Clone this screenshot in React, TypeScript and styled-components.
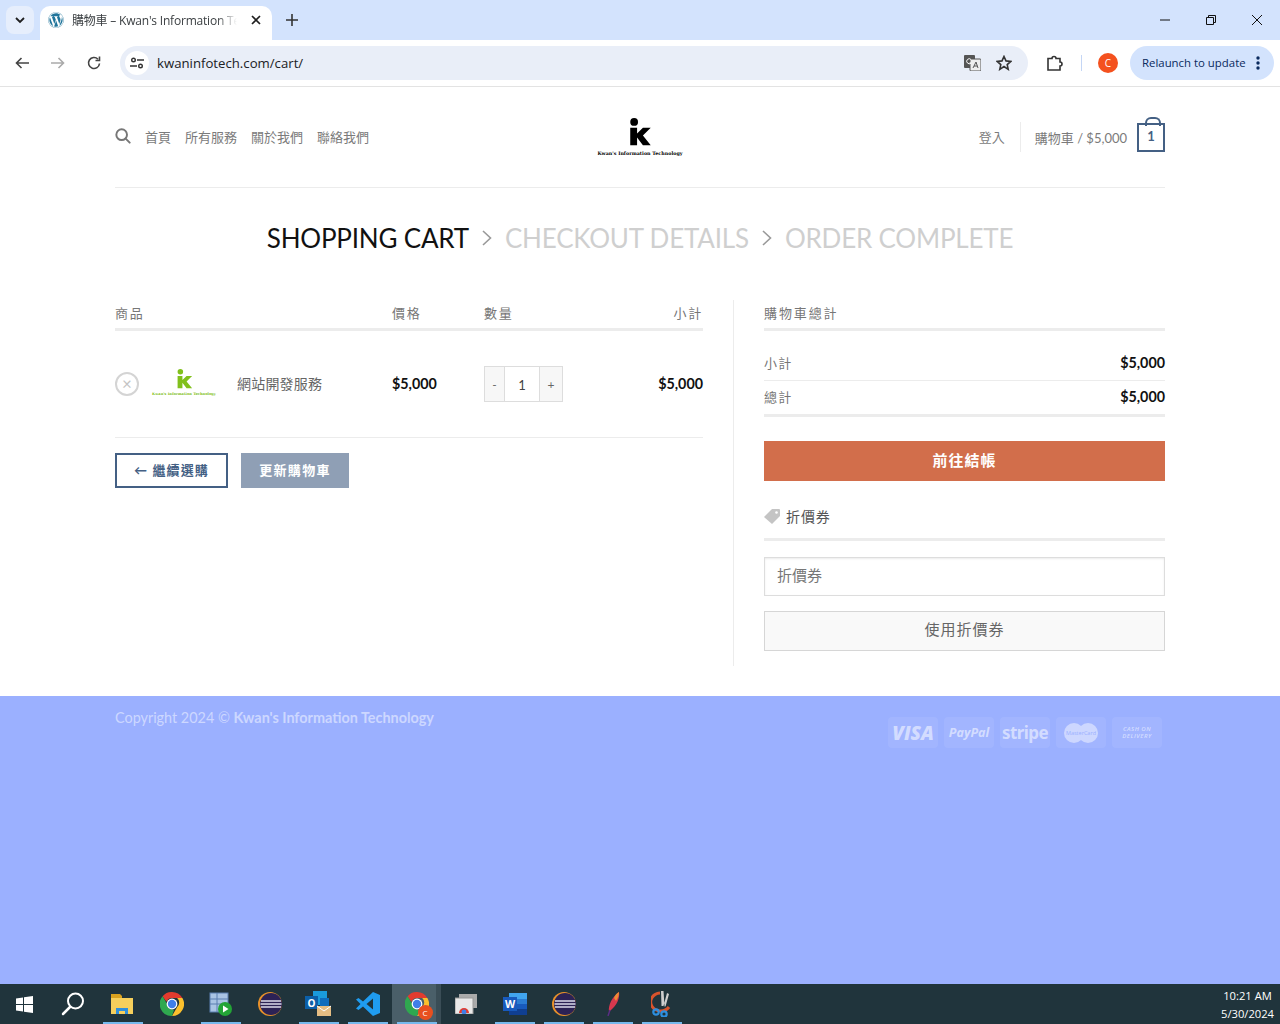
import React from "react";
import styled, { createGlobalStyle } from "styled-components";
import { FaWordpress } from "react-icons/fa";

const GlobalStyle = createGlobalStyle`
    html, body {
        margin: 0;
        padding: 0;
        background: #fff;
    }
    * {
        box-sizing: border-box;
    }
`;

const pageFont = `Lato, "Noto Sans CJK TC", sans-serif`;
const uiFont = `"Open Sans", "Noto Sans CJK TC", sans-serif`;

const Screen = styled.div`
    width: 1280px;
    height: 1024px;
    display: flex;
    flex-direction: column;
    overflow: hidden;
    font-family: ${pageFont};
`;

/* browser chrome */
const TabStrip = styled.div`
    height: 40px;
    background: #d3e3fd;
    display: flex;
    align-items: flex-end;
    padding-left: 6px;
    flex: none;
`;

const TabSearch = styled.div`
    width: 28px;
    height: 28px;
    margin-bottom: 6px;
    border-radius: 8px;
    background: #e6eefc;
    display: flex;
    align-items: center;
    justify-content: center;
`;

const Tab = styled.div`
    width: 232px;
    height: 34px;
    margin-left: 6px;
    border-radius: 10px 10px 0 0;
    background: #fff;
    display: flex;
    align-items: center;
    padding: 0 8px 6px;
    position: relative;
`;

const TabTitle = styled.div`
    width: 165px;
    margin-left: 8px;
    font: 12px ${uiFont};
    letter-spacing: -0.2px;
    color: #3c4043;
    white-space: nowrap;
    -webkit-mask-image: linear-gradient(90deg, #000 88%, transparent);
    mask-image: linear-gradient(90deg, #000 88%, transparent);
`;

const IconSlot = styled.div<{ $w?: number; $ml?: number }>`
    width: ${(p) => p.$w ?? 16}px;
    margin-left: ${(p) => p.$ml ?? 0}px;
    display: flex;
    align-items: center;
    justify-content: center;
    flex: none;
`;

const NewTab = styled(IconSlot)`
    height: 28px;
    margin-bottom: 6px;
`;

const WindowControls = styled.div`
    margin-left: auto;
    height: 40px;
    display: flex;
    align-items: center;
`;

const WindowButton = styled.div`
    width: 46px;
    height: 40px;
    display: flex;
    align-items: center;
    justify-content: center;
`;

const Toolbar = styled.div`
    height: 47px;
    background: #fff;
    border-bottom: 1px solid #e3e3e3;
    display: flex;
    align-items: center;
    padding: 0 6px 1px 4px;
    flex: none;
`;

const NavButton = styled.div`
    width: 36px;
    height: 34px;
    display: flex;
    align-items: center;
    justify-content: center;
`;

const Omnibox = styled.div`
    width: 908px;
    height: 34px;
    margin-left: 8px;
    border-radius: 17px;
    background: #e9eef8;
    display: flex;
    align-items: center;
    padding: 0 15px 0 5px;
`;

const SiteInfo = styled.div`
    width: 24px;
    height: 24px;
    border-radius: 50%;
    background: #fff;
    display: flex;
    align-items: center;
    justify-content: center;
`;

const Url = styled.div`
    flex: 1;
    margin-left: 8px;
    font: 13.2px ${uiFont};
    color: #202124;
`;

const Avatar = styled.div`
    width: 20px;
    height: 20px;
    border-radius: 50%;
    background: #f4511e;
    color: #fff;
    font: 10px ${uiFont};
    display: flex;
    align-items: center;
    justify-content: center;
    margin-left: 16px;
`;

const ToolbarRule = styled.div`
    width: 1px;
    height: 16px;
    background: #c4d6f5;
    margin-left: 17px;
`;

const Relaunch = styled.div`
    width: 144px;
    height: 34px;
    margin-left: 12px;
    border-radius: 17px;
    background: #d3e3fd;
    color: #0a2a5e;
    font: 11.4px ${uiFont};
    display: flex;
    align-items: center;
    justify-content: space-between;
    padding: 0 14px 0 12px;
`;

/* page */
const Page = styled.div`
    flex: 1;
    background: #fff;
    display: flex;
    flex-direction: column;
`;

const Container = styled.div`
    width: 1050px;
    margin-left: 115px;
`;

const Header = styled(Container)`
    height: 101px;
    border-bottom: 1px solid #ececec;
    display: grid;
    grid-template-columns: 1fr 100px 1fr;
    align-items: center;
`;

const NavLeft = styled.div`
    display: flex;
    align-items: center;
    padding-bottom: 2px;
`;

const NavLink = styled.span`
    font-size: 13px;
    color: #7b7b7b;
    margin-left: 14px;
    letter-spacing: 0;
`;

const Logo = styled.div<{ $color: string; $size: number; $mark: number; $gap: number }>`
    display: flex;
    flex-direction: column;
    align-items: center;
    color: ${(p) => p.$color};
    font-family: "DejaVu Serif", serif;
    font-weight: 700;
    font-size: ${(p) => p.$size}px;
    line-height: 1;
    white-space: nowrap;

    svg {
        width: ${(p) => p.$mark}px;
        height: ${(p) => p.$mark * 1.22}px;
        margin-bottom: ${(p) => p.$gap}px;
        fill: ${(p) => p.$color};
    }
`;

const NavRight = styled.div`
    display: flex;
    align-items: center;
    justify-content: flex-end;
    font-size: 13px;
    color: #7b7b7b;
`;

const Login = styled.span`
    padding-right: 15px;
    height: 30px;
    line-height: 30px;
    border-right: 1px solid #ececec;
    margin-right: 14px;
`;

const CartBox = styled.div`
    width: 28px;
    height: 29px;
    margin-left: 10px;
    border: 2px solid #446084;
    color: #446084;
    font-size: 13px;
    font-weight: 700;
    display: flex;
    align-items: center;
    justify-content: center;
    padding-bottom: 2px;
    position: relative;

    &::before {
        content: "";
        position: absolute;
        left: 6px;
        top: -8px;
        width: 12px;
        height: 7px;
        border: 2px solid #446084;
        border-bottom: 0;
        border-radius: 6px 6px 0 0;
    }
`;

const Steps = styled.div`
    height: 101px;
    padding-bottom: 2px;
    display: flex;
    align-items: center;
    justify-content: center;
    font-size: 26px;
    letter-spacing: -0.2px;
    color: #cfcfcf;
`;

const Step = styled.span<{ $active?: boolean }>`
    color: ${(p) => (p.$active ? "#111" : "#cfcfcf")};
`;

const StepArrow = styled.span`
    display: flex;
    margin: 0 13px;
`;

const CartLayout = styled(Container)`
    display: grid;
    grid-template-columns: 619px 431px;
    height: 366px;
    margin-top: 11px;
    margin-bottom: 30px;
`;

const CartColumn = styled.div`
    padding-right: 30px;
    border-right: 1px solid #ececec;
`;

const HeadRow = styled.div`
    height: 31px;
    padding-top: 4px;
    border-bottom: 3px solid #ececec;
    display: grid;
    grid-template-columns: 277px 92px 1fr auto;
    font-size: 13px;
    color: #777;
    letter-spacing: 1.7px;
    line-height: 18px;
`;

const Price = styled.span`
    font-size: 14.3px;
    font-weight: 700;
    color: #111;
`;

const ItemRow = styled.div`
    height: 107px;
    border-bottom: 1px solid #ececec;
    display: grid;
    grid-template-columns: 277px 92px 1fr auto;
    align-items: center;

    ${Price} {
        margin-bottom: 2px;
    }
`;

const ItemCell = styled.div`
    display: flex;
    align-items: center;
`;

const RemoveButton = styled.div`
    width: 24px;
    height: 24px;
    border-radius: 50%;
    border: 2px solid #d4d4d4;
    color: #c4c4c4;
    display: flex;
    align-items: center;
    justify-content: center;
    font-size: 17px;
    line-height: 1;
    padding-bottom: 1px;
`;

const ItemLogo = styled.div`
    width: 66px;
    margin-left: 12px;
    padding-bottom: 2px;
`;

const ItemName = styled.span`
    margin-left: 20px;
    margin-bottom: 2px;
    font-size: 14px;
    color: #666;
    letter-spacing: 0.2px;
`;

const Quantity = styled.div`
    display: flex;
    height: 36px;
    width: 79px;
    border: 1px solid #ddd;
`;

const QtyStep = styled.div<{ $w: number }>`
    width: ${(p) => p.$w}px;
    background: #f7f7f7;
    color: #666;
    font-size: 12px;
    display: flex;
    align-items: center;
    justify-content: center;
`;

const QtyValue = styled.div`
    flex: 1;
    padding-top: 1px;
    border-left: 1px solid #ddd;
    border-right: 1px solid #ddd;
    color: #444;
    font-size: 13px;
    display: flex;
    align-items: center;
    justify-content: center;
`;

const CartActions = styled.div`
    display: flex;
    gap: 13px;
    margin-top: 15px;
`;

const ContinueButton = styled.div`
    width: 113px;
    height: 35px;
    padding-bottom: 2px;
    border: 2px solid #446084;
    color: #446084;
    font-size: 13px;
    font-weight: 700;
    letter-spacing: 1.1px;
    display: flex;
    align-items: center;
    justify-content: center;
`;

const UpdateButton = styled.div`
    width: 108px;
    height: 35px;
    padding-bottom: 2px;
    background: #8f9fb5;
    color: #fff;
    font-size: 13px;
    font-weight: 700;
    letter-spacing: 1.3px;
    display: flex;
    align-items: center;
    justify-content: center;
`;

const TotalsColumn = styled.div`
    padding-left: 30px;
`;

const TotalsHead = styled.div`
    height: 31px;
    padding-top: 4px;
    border-bottom: 3px solid #ececec;
    font-size: 13px;
    color: #777;
    letter-spacing: 1.9px;
    line-height: 18px;
`;

const TotalRow = styled.div<{ $thick?: boolean }>`
    height: ${(p) => (p.$thick ? 36 : 34)}px;
    border-bottom: ${(p) => (p.$thick ? "3px" : "1px")} solid #ececec;
    padding-bottom: ${(p) => (p.$thick ? 3 : 0)}px;
    display: flex;
    align-items: center;
    justify-content: space-between;
    font-size: 13px;
    color: #777;
    letter-spacing: 1.2px;

    ${Price} {
        letter-spacing: 0;
    }
`;

const FirstTotal = styled(TotalRow)`
    height: 50px;
    padding-top: 14px;
`;

const CheckoutButton = styled.div`
    height: 40px;
    margin-top: 24px;
    padding-bottom: 4px;
    background: #d26e4b;
    color: #fff;
    font-size: 15px;
    font-weight: 700;
    letter-spacing: 1px;
    display: flex;
    align-items: center;
    justify-content: center;
`;

const CouponHead = styled.div`
    height: 42px;
    margin-top: 18px;
    padding-bottom: 5px;
    border-bottom: 3px solid #ececec;
    display: flex;
    align-items: center;
    gap: 6px;
    font-size: 14px;
    color: #555;
    letter-spacing: 0.9px;
`;

const CouponField = styled.div`
    height: 39px;
    margin-top: 16px;
    padding: 0 0 4px 12px;
    border: 1px solid #ddd;
    box-shadow: inset 0 1px 2px rgba(0, 0, 0, 0.08);
    display: flex;
    align-items: center;
    font-size: 15px;
    color: #777;
`;

const CouponButton = styled.div`
    height: 40px;
    margin-top: 15px;
    padding-bottom: 5px;
    border: 1px solid #d6d6d6;
    background: #f9f9f9;
    color: #666;
    font-size: 15px;
    letter-spacing: 1px;
    display: flex;
    align-items: center;
    justify-content: center;
`;

/* footer */
const Footer = styled.div`
    height: 288px;
    background: #9bb0ff;
    flex: none;
`;

const FooterInner = styled(Container)`
    display: flex;
    justify-content: space-between;
    padding-top: 13px;
`;

const Copyright = styled.div`
    font-size: 14.4px;
    line-height: 18px;
    color: rgba(255, 255, 255, 0.5);

    strong {
        font-weight: 700;
    }
`;

const Payments = styled.div`
    display: flex;
    gap: 6px;
    margin-top: 8px;
    margin-right: 3px;
`;

const PayTile = styled.div`
    width: 50px;
    height: 31px;
    border-radius: 4px;
    background: rgba(255, 255, 255, 0.07);
    color: rgba(255, 255, 255, 0.55);
    display: flex;
    align-items: center;
    justify-content: center;
    font-family: "Open Sans", sans-serif;
    font-weight: 700;
    white-space: nowrap;
    position: relative;
`;

const Visa = styled.span`
    font-size: 19px;
    font-style: italic;
    font-weight: 800;
`;

const PayPal = styled.span`
    font-size: 12.5px;
    font-style: italic;
`;

const Stripe = styled.span`
    font-size: 17px;
    letter-spacing: -0.6px;
    font-family: "Noto Sans", sans-serif;
`;

const MasterCircles = styled.div`
    width: 34px;
    height: 20px;
    display: flex;
    align-items: center;
    justify-content: center;
    color: #9bb0ff;
    font-size: 5.5px;
    font-weight: 400;
    position: relative;

    &::before,
    &::after {
        content: "";
        position: absolute;
        top: 0;
        width: 20px;
        height: 20px;
        border-radius: 50%;
        background: #cdd7ff;
    }

    &::before {
        left: 0;
    }

    &::after {
        right: 0;
    }

    span {
        position: relative;
        z-index: 1;
    }
`;

const Cash = styled.span`
    font-size: 6px;
    font-style: italic;
    font-weight: 600;
    line-height: 7px;
    text-align: center;
    letter-spacing: 0.5px;
`;

/* taskbar */
const Taskbar = styled.div`
    height: 40px;
    background: #20343c;
    display: flex;
    flex: none;
`;

const TaskStart = styled.div<{ $w: number; $pr?: number }>`
    width: ${(p) => p.$w}px;
    padding-right: ${(p) => p.$pr ?? 0}px;
    display: flex;
    align-items: center;
    justify-content: center;
    flex: none;
`;

const TaskItem = styled.div<{ $open?: boolean; $active?: boolean }>`
    width: 49px;
    height: 40px;
    flex: none;
    display: flex;
    align-items: center;
    justify-content: center;
    position: relative;
    background: ${(p) => (p.$active ? "linear-gradient(90deg, #4a5f69 44px, #3a4d56 44px)" : "transparent")};

    &::after {
        content: "";
        display: ${(p) => (p.$open ? "block" : "none")};
        position: absolute;
        left: 5px;
        right: 4px;
        bottom: 0;
        height: 2px;
        background: #76b9ed;
    }
`;

const BadgedIcon = styled.div`
    display: flex;
    position: relative;
`;

const TaskBadge = styled.span`
    position: absolute;
    right: -4px;
    bottom: -4px;
    width: 15px;
    height: 15px;
    border-radius: 50%;
    background: #e8501f;
    color: #fff;
    font: 8px/15px ${uiFont};
    text-align: center;
`;

const Clock = styled.div`
    margin-left: auto;
    padding: 3px 6px 0 0;
    color: #fff;
    font: 11.2px/18px ${uiFont};
    text-align: center;
`;

const KMark = () => (
    <svg viewBox="0 0 24 30">
        <circle cx="6" cy="4" r="4" />
        <path d="M2 10h7v6l6-6h8l-8 8 8 10h-8l-6-8v8H2z" />
    </svg>
);

const Search = () => (
    <svg width="16" height="16" viewBox="0 0 18 18" fill="none" stroke="#777" strokeWidth="2.2">
        <circle cx="7.5" cy="7.5" r="6" />
        <path d="M12 12l4.5 4.5" strokeLinecap="round" />
    </svg>
);

const Chevron = () => (
    <svg width="10" height="18" viewBox="0 0 10 18" fill="none" stroke="#999" strokeWidth="1.6">
        <path d="M1 2l7.5 7L1 16" />
    </svg>
);

const ChromeLogo = () => (
    <svg width="24" height="24" viewBox="0 0 24 24">
        <path d="M12 0a12 12 0 0 1 10.4 6H12a6 6 0 0 0-5.6 3.8L2.6 4.2A12 12 0 0 1 12 0z" fill="#e33b2e" />
        <path d="M22.4 6A12 12 0 0 1 12 24l5.2-9a6 6 0 0 0 0-9z" fill="#fbc02d" />
        <path d="M12 24A12 12 0 0 1 2.6 4.2l4.6 8A6 6 0 0 0 14 17.8z" fill="#2fa84f" />
        <circle cx="12" cy="12" r="5.4" fill="#fff" />
        <circle cx="12" cy="12" r="4.2" fill="#3f7ee8" />
    </svg>
);

const Eclipse = () => (
    <svg width="24" height="24" viewBox="0 0 24 24">
        <circle cx="12" cy="12" r="12" fill="#e8912a" />
        <circle cx="13" cy="12" r="11" fill="#2c2255" />
        <path d="M3 9h20M2.5 12h21M3 15h20" stroke="#dcdcec" strokeWidth="1.4" />
    </svg>
);

const taskbarIcons: { key: string; open?: boolean; active?: boolean; icon: React.ReactNode }[] = [
    {
        key: "explorer",
        open: true,
        icon: (
            <svg width="24" height="20" viewBox="0 0 24 20">
                <path d="M0 0h9l2 2v3H0z" fill="#d9a21f" />
                <path d="M0 4h22v16H0z" fill="#f6cf5c" />
                <path d="M5 20v-6h12v6h-3v-3H8v3z" fill="#2f8fdc" />
            </svg>
        ),
    },
    { key: "chrome", icon: <ChromeLogo /> },
    {
        key: "sheet",
        open: true,
        icon: (
            <svg width="24" height="24" viewBox="0 0 24 24">
                <rect x="1" y="1" width="18" height="19" fill="#a9c4e4" stroke="#5b7fb0" />
                <path d="M1 7h18M1 12h18M8 1v19" stroke="#5b7fb0" />
                <circle cx="16" cy="17" r="7" fill="#23a436" />
                <path d="M14 13.5l5.5 3.5-5.5 3.5z" fill="#fff" />
            </svg>
        ),
    },
    { key: "eclipse", icon: <Eclipse /> },
    {
        key: "outlook",
        open: true,
        icon: (
            <svg width="27" height="26" viewBox="0 0 27 26">
                <path d="M8 0h14v14H8z" fill="#1a9bdc" />
                <path d="M15 7h9v9h-9z" fill="#0f6cbd" />
                <rect x="0" y="5" width="13" height="13" fill="#0b5fa8" />
                <text x="6.5" y="15.5" fontSize="10" fontWeight="700" fill="#fff" textAnchor="middle" fontFamily="Open Sans">
                    O
                </text>
                <rect x="12" y="15" width="14" height="10" fill="#e5bd83" />
                <path d="M12 15l7 5 7-5" fill="none" stroke="#fff" />
            </svg>
        ),
    },
    {
        key: "vscode",
        open: true,
        icon: (
            <svg width="24" height="24" viewBox="0 0 24 24">
                <path d="M17 0l7 3v18l-7 3-10-9.5L2.5 18 0 16.5 4.5 12 0 7.5 2.5 6 7 9.5z" fill="#1f9cf0" />
                <path d="M17 6.5L10.5 12l6.5 5.5z" fill="#20343c" />
            </svg>
        ),
    },
    {
        key: "chrome-profile",
        open: true,
        active: true,
        icon: (
            <BadgedIcon>
                <ChromeLogo />
                <TaskBadge>C</TaskBadge>
            </BadgedIcon>
        ),
    },
    {
        key: "chrome-apps",
        icon: (
            <svg width="22" height="20" viewBox="0 0 22 20">
                <rect x="4" y="0" width="18" height="14" fill="#aaa" />
                <rect x="0" y="4" width="18" height="16" fill="#e9e9e9" stroke="#999" />
                <path d="M4 19a5 5 0 0 1 10 0z" fill="#e33b2e" />
                <circle cx="9" cy="18" r="2.4" fill="#3f7ee8" />
            </svg>
        ),
    },
    {
        key: "word",
        open: true,
        icon: (
            <svg width="24" height="22" viewBox="0 0 24 22">
                <rect x="6" y="0" width="18" height="22" fill="#2b7cd3" />
                <rect x="6" y="0" width="18" height="6" fill="#41a5ee" />
                <rect x="6" y="11" width="18" height="5" fill="#185abd" />
                <rect x="6" y="16" width="18" height="6" fill="#103f91" />
                <rect x="0" y="4" width="14" height="14" fill="#185abd" />
                <text x="7" y="15" fontSize="10.5" fontWeight="700" fill="#fff" textAnchor="middle" fontFamily="Open Sans">
                    W
                </text>
            </svg>
        ),
    },
    { key: "eclipse-2", open: true, icon: <Eclipse /> },
    {
        key: "feather",
        open: true,
        icon: (
            <svg width="14" height="24" viewBox="0 0 14 24">
                <path d="M13 0c1 6-2 13-8 18L3 20C2 13 6 5 13 0z" fill="#d8384e" />
                <path d="M13 0c0 3-1 6-3 9L8 6c1-3 3-5 5-6z" fill="#ef8b34" />
                <path d="M4 18l-2 6" stroke="#5b2c87" strokeWidth="1.4" />
            </svg>
        ),
    },
    {
        key: "snip",
        open: true,
        icon: (
            <svg width="22" height="26" viewBox="0 0 22 26">
                <path d="M9 2a10 9 0 1 0 9 14" fill="none" stroke="#d9532c" strokeWidth="3" />
                <path d="M10 0h2.5l1 15h-3zM16 2l-3.5 13 2 .5L18 3z" fill="#cfcfcf" />
                <circle cx="5" cy="21" r="2.7" fill="none" stroke="#2d8fe0" strokeWidth="2.2" />
                <circle cx="13" cy="23" r="2.7" fill="none" stroke="#2d8fe0" strokeWidth="2.2" />
            </svg>
        ),
    },
];

function App() {
    return (
        <Screen>
            <GlobalStyle />
            <TabStrip>
                <TabSearch>
                    <svg width="10" height="7" viewBox="0 0 10 7" fill="none" stroke="#1f1f1f" strokeWidth="1.8">
                        <path d="M1 1l4 4 4-4" />
                    </svg>
                </TabSearch>
                <Tab>
                    <FaWordpress size={16} color="#21759b" />
                    <TabTitle>購物車 – Kwan's Information Te</TabTitle>
                    <IconSlot $ml={11}>
                        <svg width="10" height="10" viewBox="0 0 10 10" stroke="#1f1f1f" strokeWidth="1.7">
                            <path d="M1 1l8 8M9 1l-8 8" />
                        </svg>
                    </IconSlot>
                </Tab>
                <NewTab $w={36} $ml={2}>
                    <svg width="12" height="12" viewBox="0 0 12 12" stroke="#333" strokeWidth="1.6">
                        <path d="M6 0v12M0 6h12" />
                    </svg>
                </NewTab>
                <WindowControls>
                    <WindowButton>
                        <svg width="10" height="2" viewBox="0 0 10 2" stroke="#111">
                            <path d="M0 1h10" />
                        </svg>
                    </WindowButton>
                    <WindowButton>
                        <svg width="10" height="10" viewBox="0 0 10 10" fill="none" stroke="#111">
                            <path d="M.5 2.5h7v7h-7zM2.5 2.5v-2h7v7h-2" />
                        </svg>
                    </WindowButton>
                    <WindowButton>
                        <svg width="10" height="10" viewBox="0 0 10 10" stroke="#111">
                            <path d="M0 0l10 10M10 0L0 10" />
                        </svg>
                    </WindowButton>
                </WindowControls>
            </TabStrip>
            <Toolbar>
                <NavButton>
                    <svg width="14" height="12" viewBox="0 0 14 12" fill="none" stroke="#444" strokeWidth="1.6">
                        <path d="M14 6H1.5M6.5 1l-5 5 5 5" />
                    </svg>
                </NavButton>
                <NavButton>
                    <svg width="14" height="12" viewBox="0 0 14 12" fill="none" stroke="#aaa" strokeWidth="1.6">
                        <path d="M0 6h12.5M7.5 1l5 5-5 5" />
                    </svg>
                </NavButton>
                <NavButton>
                    <svg width="14" height="14" viewBox="0 0 14 14" fill="none" stroke="#444" strokeWidth="1.6">
                        <path d="M12.5 7.5A5.5 5.5 0 1 1 11 3.2" />
                        <path d="M12.5 0.5v4h-4" />
                    </svg>
                </NavButton>
                <Omnibox>
                    <SiteInfo>
                        <svg width="14" height="12" viewBox="0 0 14 12" fill="none" stroke="#333" strokeWidth="1.4">
                            <circle cx="3.5" cy="3" r="1.8" />
                            <path d="M7 3h7M0 9h7" />
                            <circle cx="10.5" cy="9" r="1.8" />
                        </svg>
                    </SiteInfo>
                    <Url>kwaninfotech.com/cart/</Url>
                    <IconSlot $w={18}>
                        <svg width="17" height="16" viewBox="0 0 17 16">
                            <rect x="0" y="0" width="11" height="13" rx="1" fill="#555" />
                            <rect x="6" y="4" width="11" height="12" rx="1" fill="#eee" stroke="#555" />
                            <path d="M9 13l3-6 2 6M10 11h3" stroke="#555" fill="none" />
                            <path d="M7 4.5A2.5 2.5 0 1 0 7 8H5.5" stroke="#fff" fill="none" />
                        </svg>
                    </IconSlot>
                    <IconSlot $w={18} $ml={14}>
                        <svg width="16" height="16" viewBox="0 0 16 16" fill="none" stroke="#333" strokeWidth="1.6">
                            <path d="M8 1.5l2 4.4 4.8.5-3.6 3.2 1 4.7L8 11.5l-4.2 2.8 1-4.7L1.2 6.4 6 5.900z" />
                        </svg>
                    </IconSlot>
                </Omnibox>
                <IconSlot $w={18} $ml={18}>
                    <svg width="17" height="16" viewBox="0 0 17 16" fill="none" stroke="#333" strokeWidth="1.6">
                        <path d="M1 3.5h4a2 2 0 0 1 4 0h4V7a2 2 0 0 1 0 4v4H1z" />
                    </svg>
                </IconSlot>
                <ToolbarRule />
                <Avatar>C</Avatar>
                <Relaunch>
                    Relaunch to update
                    <svg width="4" height="14" viewBox="0 0 4 14" fill="#0a2a5e">
                        <circle cx="2" cy="2" r="1.7" />
                        <circle cx="2" cy="7" r="1.7" />
                        <circle cx="2" cy="12" r="1.7" />
                    </svg>
                </Relaunch>
            </Toolbar>
            <Page>
                <Header>
                    <NavLeft>
                        <Search />
                        <NavLink>首頁</NavLink>
                        <NavLink>所有服務</NavLink>
                        <NavLink>關於我們</NavLink>
                        <NavLink>聯絡我們</NavLink>
                    </NavLeft>
                    <Logo $color="#000" $size={4.8} $mark={24} $gap={3}>
                        <KMark />
                        Kwan's Information Technology
                    </Logo>
                    <NavRight>
                        <Login>登入</Login>
                        購物車 / $5,000
                        <CartBox>1</CartBox>
                    </NavRight>
                </Header>
                <Steps>
                    <Step $active>SHOPPING CART</Step>
                    <StepArrow>
                        <Chevron />
                    </StepArrow>
                    <Step>CHECKOUT DETAILS</Step>
                    <StepArrow>
                        <Chevron />
                    </StepArrow>
                    <Step>ORDER COMPLETE</Step>
                </Steps>
                <CartLayout>
                    <CartColumn>
                        <HeadRow>
                            <span>商品</span>
                            <span>價格</span>
                            <span>數量</span>
                            <span>小計</span>
                        </HeadRow>
                        <ItemRow>
                            <ItemCell>
                                <RemoveButton>×</RemoveButton>
                                <ItemLogo>
                                    <Logo $color="#81c01c" $size={3.6} $mark={17} $gap={3}>
                                        <KMark />
                                        Kwan's Information Technology
                                    </Logo>
                                </ItemLogo>
                                <ItemName>網站開發服務</ItemName>
                            </ItemCell>
                            <Price>$5,000</Price>
                            <Quantity>
                                <QtyStep $w={19}>-</QtyStep>
                                <QtyValue>1</QtyValue>
                                <QtyStep $w={22}>+</QtyStep>
                            </Quantity>
                            <Price>$5,000</Price>
                        </ItemRow>
                        <CartActions>
                            <ContinueButton>← 繼續選購</ContinueButton>
                            <UpdateButton>更新購物車</UpdateButton>
                        </CartActions>
                    </CartColumn>
                    <TotalsColumn>
                        <TotalsHead>購物車總計</TotalsHead>
                        <FirstTotal>
                            <span>小計</span>
                            <Price>$5,000</Price>
                        </FirstTotal>
                        <TotalRow $thick>
                            <span>總計</span>
                            <Price>$5,000</Price>
                        </TotalRow>
                        <CheckoutButton>前往結帳</CheckoutButton>
                        <CouponHead>
                            <svg width="16" height="15" viewBox="0 0 16 15">
                                <path d="M8 0h7a1 1 0 0 1 1 1v6l-8 8-8-7z" fill="#c4c4c4" />
                                <circle cx="12.5" cy="3.5" r="1.3" fill="#fff" />
                            </svg>
                            折價券
                        </CouponHead>
                        <CouponField>折價券</CouponField>
                        <CouponButton>使用折價券</CouponButton>
                    </TotalsColumn>
                </CartLayout>
                <Footer>
                    <FooterInner>
                        <Copyright>
                            Copyright 2024 © <strong>Kwan's Information Technology</strong>
                        </Copyright>
                        <Payments>
                            <PayTile>
                                <Visa>VISA</Visa>
                            </PayTile>
                            <PayTile>
                                <PayPal>PayPal</PayPal>
                            </PayTile>
                            <PayTile>
                                <Stripe>stripe</Stripe>
                            </PayTile>
                            <PayTile>
                                <MasterCircles>
                                    <span>MasterCard</span>
                                </MasterCircles>
                            </PayTile>
                            <PayTile>
                                <Cash>
                                    CASH ON
                                    <br />
                                    DELIVERY
                                </Cash>
                            </PayTile>
                        </Payments>
                    </FooterInner>
                </Footer>
            </Page>
            <Taskbar>
                <TaskStart $w={49}>
                    <svg width="17" height="17" viewBox="0 0 17 17" fill="#fff">
                        <path d="M0 2.5l7-1V8H0zM8 1.3L17 0v8H8zM0 9h7v6.5l-7-1zM8 9h9v8l-9-1.3z" />
                    </svg>
                </TaskStart>
                <TaskStart $w={49} $pr={2}>
                    <svg width="24" height="24" viewBox="0 0 24 24" fill="none" stroke="#fff" strokeWidth="2">
                        <circle cx="14.5" cy="9" r="7.5" />
                        <path d="M9 15l-7 7" strokeWidth="2.5" strokeLinecap="round" />
                    </svg>
                </TaskStart>
                {taskbarIcons.map((t) => (
                    <TaskItem key={t.key} $open={t.open} $active={t.active}>
                        {t.icon}
                    </TaskItem>
                ))}
                <Clock>
                    10:21 AM
                    <br />
                    5/30/2024
                </Clock>
            </Taskbar>
        </Screen>
    );
}

export default App;
